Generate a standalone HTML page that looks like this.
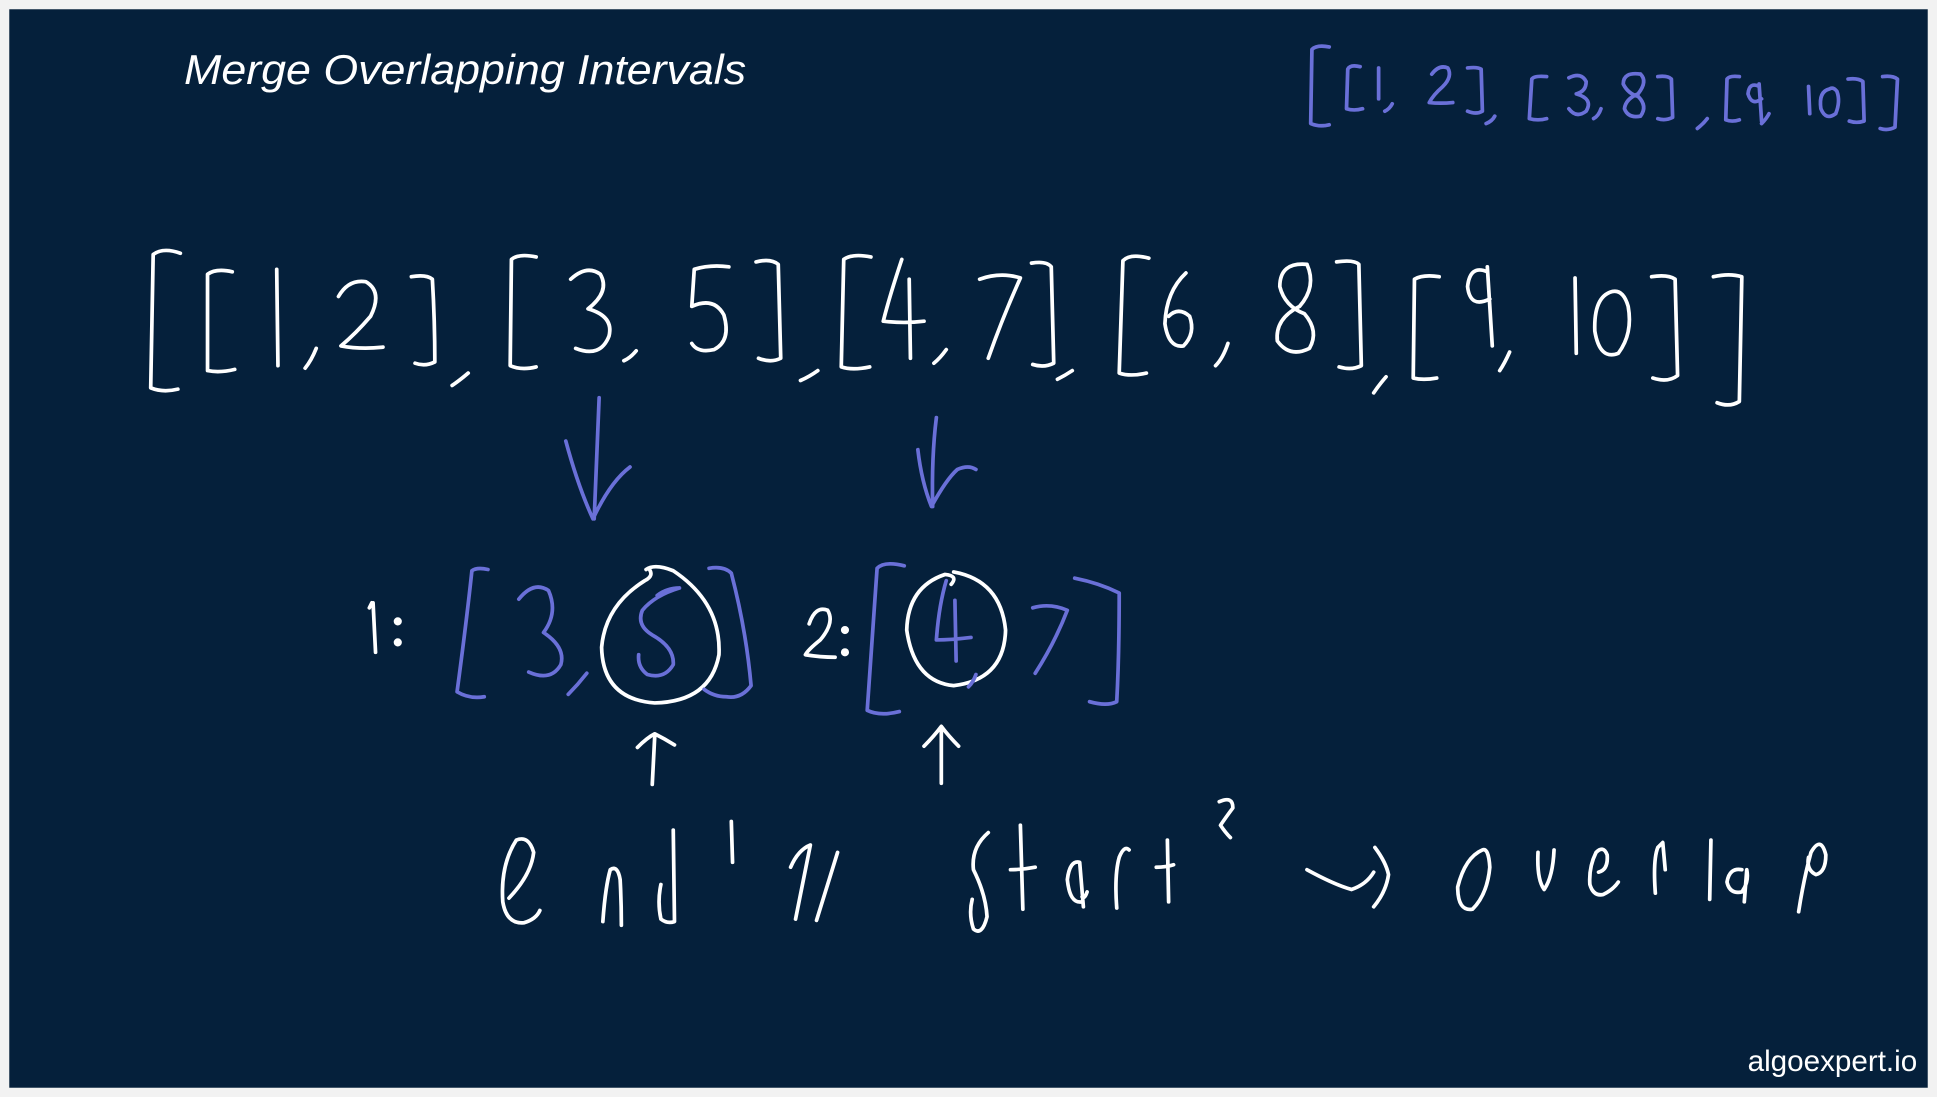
<!DOCTYPE html>
<html><head><meta charset="utf-8"><style>
html,body{margin:0;padding:0;background:#f4f4f4;width:1937px;height:1097px;overflow:hidden}
svg{display:block}
</style></head><body>
<svg width="1937" height="1097" viewBox="0 0 1568 888" preserveAspectRatio="none" xmlns="http://www.w3.org/2000/svg">
<rect x="0" y="0" width="1568" height="888" fill="#f2f2f2"/>
<rect x="7.5" y="7.5" width="1553" height="873" fill="#05203b"/>
<text x="149" y="68" textLength="455" lengthAdjust="spacingAndGlyphs" font-family="Liberation Sans, sans-serif" font-style="italic" font-size="34" fill="#fff">Merge Overlapping Intervals</text>
<text x="1552" y="867" text-anchor="end" font-family="Liberation Sans, sans-serif" font-size="24" fill="#fff">algoexpert.io</text>

<g fill="none" stroke="#fff" stroke-width="3" stroke-linecap="round" stroke-linejoin="round">
<!-- main row -->
<path d="M146 205 Q132 200 124 206 L122 314 Q132 318 144 315"/>
<path d="M188 220 Q175 217 168 222 L168 300 Q178 302 190 299"/>
<path d="M224 218 L225 296"/>
<path d="M256 282 Q252 292 247 298"/>
<path d="M274 240 Q282 226 296 228 Q310 236 300 256 Q288 270 276 280 Q292 283 310 281"/>
<path d="M333 224 Q345 222 350 226 Q352 260 352 293 Q344 297 336 294"/>
<path d="M379 302 Q372 308 366 312"/>
<path d="M434 208 Q420 205 414 210 L413 296 Q422 300 434 297"/>
<path d="M462 226 Q475 214 486 222 Q494 236 476 250 Q497 256 493 272 Q486 290 466 282"/>
<path d="M515 284 Q510 290 505 292"/>
<path d="M590 216 Q575 214 562 218 L560 248 Q578 240 586 255 Q592 276 578 283 Q565 286 560 278"/>
<path d="M612 212 Q624 209 630 214 L632 290 Q624 294 614 290"/>
<path d="M662 300 Q655 305 648 308"/>
<path d="M705 208 Q690 205 683 210 L681 297 Q690 300 704 297"/>
<path d="M730 210 Q720 240 715 260 Q732 262 748 260 M736 226 L737 290"/>
<path d="M766 283 Q761 290 756 294"/>
<path d="M793 226 Q810 220 826 225 Q812 256 800 290"/>
<path d="M835 213 Q847 211 851 216 L853 294 Q845 298 836 295"/>
<path d="M868 300 Q862 304 856 307"/>
<path d="M930 209 Q915 205 909 211 L906 302 Q915 305 928 302"/>
<path d="M960 221 Q944 236 943 262 Q946 282 958 280 Q968 270 963 256 Q954 248 946 256"/>
<path d="M994 278 Q990 290 984 296"/>
<path d="M1058 214 Q1036 212 1036 232 Q1040 248 1056 254 Q1068 268 1060 282 Q1044 290 1034 276 Q1032 258 1052 248 Q1066 232 1058 214"/>
<path d="M1082 212 Q1096 210 1100 214 L1102 296 Q1094 300 1084 297"/>
<path d="M1122 305 Q1116 312 1112 318"/>
<path d="M1165 224 Q1152 222 1145 226 L1144 306 Q1152 308 1163 306"/>
<path d="M1204 220 Q1190 214 1188 232 Q1190 250 1206 242 M1204 216 L1208 280"/>
<path d="M1222 285 Q1218 294 1214 300"/>
<path d="M1275 225 L1276 286"/>
<path d="M1305 236 Q1290 240 1291 268 Q1295 292 1310 286 Q1322 270 1318 248 Q1314 234 1305 236"/>
<path d="M1337 224 Q1350 222 1356 226 L1358 304 Q1350 310 1338 306"/>
<path d="M1387 224 Q1400 221 1410 224 L1408 325 Q1400 330 1390 326"/>

<!-- row 2 white -->
<path d="M302 488 L304 528 M301 488 L299 492"/>
<circle cx="322" cy="503" r="1.8" fill="#fff"/>
<circle cx="322" cy="520" r="1.8" fill="#fff"/>
<path d="M655 505 Q660 490 670 494 Q676 504 664 518 Q654 526 652 530 Q664 532 676 532"/>
<circle cx="684" cy="510" r="1.8" fill="#fff"/>
<circle cx="684" cy="528" r="1.8" fill="#fff"/>
<path d="M523 461 Q530 456 545 462 Q584 488 582 530 Q575 568 530 569 Q488 566 487 524 Q490 490 522 470 Q530 466 525 460"/>
<path d="M772 463 Q810 470 814 510 Q813 550 772 555 Q740 552 734 510 Q735 475 765 465 Q776 466 770 473"/>
<!-- up arrows -->
<path d="M528 635 L530 596 M516 605 Q524 597 530 594 Q538 598 546 603"/>
<path d="M762 634 L762 590 M748 604 Q756 596 762 588 Q768 596 776 604"/>

<!-- bottom: end -->
<path d="M412 727 Q430 708 432 690 Q428 676 418 680 Q405 700 407 730 Q410 748 424 747 Q434 744 437 737"/>
<path d="M488 746 Q490 718 494 704 Q500 700 502 712 Q503 730 503 749"/>
<path d="M545 672 L546 746 Q540 748 535 744 Q532 730 535 716"/>
<path d="M592 665 L593 698"/>
<path d="M640 702 Q646 688 656 684 L644 744 M678 690 L661 745"/>
<!-- Start -->
<path d="M800 674 Q786 686 788 704 Q798 724 799 742 Q795 758 788 752 Q784 740 787 728"/>
<path d="M826 668 L828 736 M818 704 Q828 704 838 702"/>
<path d="M876 730 Q866 732 864 712 Q866 696 874 698 L877 734 M876 726 Q878 728 880 722"/>
<path d="M904 735 Q902 708 906 694 Q910 684 914 688"/>
<path d="M945 680 L946 730 M936 702 Q944 702 950 700"/>
<path d="M987 649 Q998 644 998 654 Q992 662 988 668 Q992 674 996 678"/>
<!-- arrow -->
<path d="M1058 704 Q1080 716 1094 720 Q1106 716 1112 706"/>
<path d="M1113 686 Q1122 698 1124 708 Q1122 722 1112 734"/>
<!-- overlap -->
<path d="M1200 688 Q1186 694 1180 718 Q1180 738 1192 736 Q1204 724 1206 702 Q1205 686 1200 688"/>
<path d="M1245 690 Q1244 712 1250 720 Q1257 710 1258 688"/>
<path d="M1294 706 Q1302 704 1301 692 Q1298 684 1292 690 Q1286 702 1287 716 Q1290 726 1298 724 Q1306 720 1310 714"/>
<path d="M1340 723 Q1338 696 1342 686 L1346 682 L1348 704"/>
<path d="M1385 680 L1384 728"/>
<path d="M1410 704 Q1400 702 1398 714 Q1400 724 1410 722 Q1416 714 1414 704 L1412 730"/>
<path d="M1456 738 Q1460 712 1466 690 Q1474 676 1478 692 Q1478 706 1470 708 Q1462 704 1464 694"/>
</g>

<g fill="none" stroke="#6a70d8" stroke-width="3" stroke-linecap="round" stroke-linejoin="round">
<!-- top-right -->
<path d="M1076 38 Q1066 36 1062 40 L1061 100 Q1068 103 1076 101"/>
<path d="M1101 54 Q1093 52 1091 56 L1090 88 Q1096 90 1103 88"/>
<path d="M1116 55 L1116 80"/>
<path d="M1127 84 Q1125 88 1121 90"/>
<path d="M1159 60 Q1165 52 1172 55 Q1176 62 1168 70 Q1160 77 1157 83 Q1166 84 1176 83"/>
<path d="M1188 55 Q1196 54 1199 56 L1200 90 Q1195 93 1188 90"/>
<path d="M1210 94 Q1208 98 1203 100"/>
<path d="M1252 62 Q1242 61 1240 64 L1238 96 Q1245 98 1252 96"/>
<path d="M1270 63 Q1280 58 1284 66 Q1284 74 1276 76 Q1290 80 1284 90 Q1276 96 1270 88"/>
<path d="M1296 88 Q1294 94 1290 96"/>
<path d="M1328 60 Q1314 58 1314 68 Q1318 76 1326 78 Q1334 86 1328 94 Q1318 96 1315 88 Q1316 80 1326 76 Q1334 66 1328 60"/>
<path d="M1342 62 Q1350 61 1353 64 L1354 95 Q1348 98 1342 96"/>
<path d="M1382 96 Q1379 100 1374 104"/>
<path d="M1408 62 Q1400 61 1398 64 L1397 97 Q1402 99 1408 97"/>
<path d="M1424 70 Q1416 66 1415 76 Q1418 86 1426 80 M1424 68 L1426 98"/>
<path d="M1432 92 Q1430 96 1426 100"/>
<path d="M1464 70 L1465 92"/>
<path d="M1481 72 Q1472 74 1474 88 Q1478 98 1486 92 Q1490 82 1487 74 Q1484 70 1481 72"/>
<path d="M1496 64 Q1504 63 1508 66 L1509 98 Q1503 100 1497 98"/>
<path d="M1524 62 Q1532 61 1536 64 L1534 103 Q1528 106 1522 104"/>

<!-- arrows down -->
<path d="M485 322 L481 420 M458 357 Q468 394 480 420 Q494 390 510 378"/>
<path d="M758 338 Q754 370 755 410 M743 364 Q746 390 754 410 Q766 388 775 380 Q784 376 790 380"/>

<!-- row 2 blue -->
<path d="M395 461 Q386 459 382 462 Q378 500 370 560 Q380 566 392 564"/>
<path d="M420 485 Q432 470 444 478 Q452 496 440 512 Q458 524 454 538 Q446 552 428 544"/>
<path d="M475 545 Q468 554 460 562"/>
<path d="M532 482 Q540 476 550 476 M550 476 Q530 482 520 494 Q515 506 528 514 Q546 524 545 538 Q538 550 524 546 Q516 540 517 530"/>
<path d="M574 460 Q586 458 592 464 Q604 510 608 555 Q600 566 588 564 Q578 564 570 558"/>
<path d="M732 458 Q716 454 710 460 Q706 520 702 575 Q712 580 728 576"/>
<path d="M766 470 Q760 490 758 518 Q770 518 786 516 M773 486 L774 535"/>
<path d="M790 546 Q788 552 784 556"/>
<path d="M836 492 Q850 488 864 494 Q854 520 838 545"/>
<path d="M870 468 Q890 472 906 480 Q906 530 904 568 Q896 572 882 568"/>
</g>
</svg>
</body></html>
